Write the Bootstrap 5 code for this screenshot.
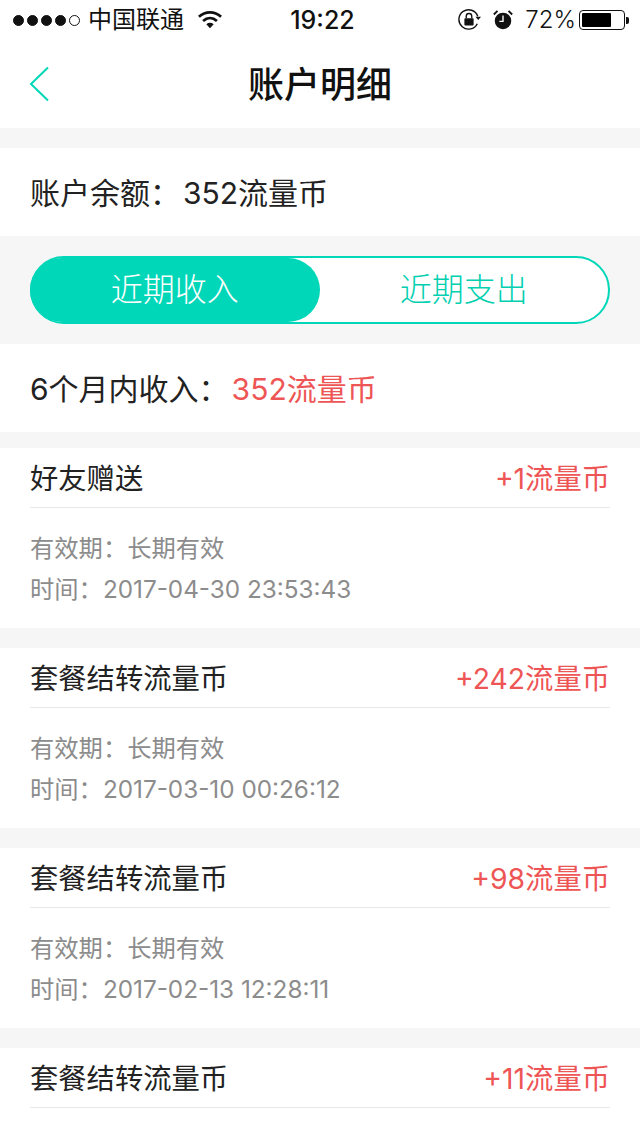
<!DOCTYPE html>
<html lang="zh-CN">
<head>
<meta charset="UTF-8">
<title>账户明细</title>
<link href="https://cdn.jsdelivr.net/npm/bootstrap@5.3.3/dist/css/bootstrap.min.css" rel="stylesheet">
<style>
  body {
    background: #fff;
    color: #1f1f1f;
    font-family: Inter, "Noto Sans CJK SC", sans-serif;
  }
  .page-wrap { width: 640px; height: 1136px; overflow: hidden; }
  .status-bar { height: 40px; padding: 0 11px 0 13px; font-size: 24px; color: #111; }
  .signal-dot { width: 11px; height: 11px; border-radius: 50%; background: #111; border: 1px solid #111; margin-right: 3px; }
  .signal-dot.empty { background: #fff; }
  .carrier { margin-left: 5px; }
  .wifi-icon { margin-left: 14px; }
  .clock { left: 5px; right: 0; top: 5px; text-align: center; font-size: 25px; line-height: 30px; font-weight: 500; }
  .alarm-icon { margin-left: 11px; }
  .batt-pct { margin-left: 11px; font-weight: 300; }
  .batt { width: 46px; height: 20px; border: 1px solid #111; border-radius: 4px; padding: 2px; margin-left: 3px; }
  .batt-fill { height: 100%; background: #000; border-radius: 1px; }
  .batt-tip { width: 3px; height: 7px; background: #111; border-radius: 0 2px 2px 0; margin-left: 1px; }
  .top-nav { height: 88px; }
  .top-nav h1 { font-size: 36px; font-weight: 500; margin: 0; padding-top: 3px; color: #111; }
  .back-arrow { left: 28px; top: 26px; }
  .gap-20 { height: 20px; background: #f6f6f6; }
  .gap-16 { height: 16px; background: #f6f6f6; }
  .summary-row { height: 88px; padding: 1px 30px 0; font-size: 30px; color: #222; }
  .colon-mark { font-family: "Noto Sans CJK TC", sans-serif; margin-right: 3px; }
  .switch-wrap { background: #f6f6f6; padding: 20px 30px; }
  .switch-box { height: 68px; border: 2px solid #00d7b8; border-radius: 34px; background: #fff; }
  .switch-on, .switch-off { width: 290px; font-size: 32px; font-weight: 300; }
  .switch-on { width: 291px; margin: -2px 0 -2px -2px; background: #00d7b8; color: #fff; border-radius: 34px; }
  .switch-off { color: #00cfb0; }
  .red-text { color: #ee5555; }
  .rec { padding: 0 30px; height: 180px; }
  .rec-head { height: 60px; border-bottom: 1px solid #e8e8e8; font-size: 28.300px; color: #222; padding-top: 3px; }
  .rec-info { padding-top: 19px; font-size: 24.300px; line-height: 40px; color: #8c8c8c; }
  .rec-info .colon-mark { margin-right: 0; }
</style>
</head>
<body>
<div class="page-wrap">
<div class="position-relative status-bar d-flex align-items-center justify-content-between">
  <div class="d-flex align-items-center">
    <span class="signal-dot"></span><span class="signal-dot"></span><span class="signal-dot"></span><span class="signal-dot"></span><span class="signal-dot empty"></span>
    <span class="carrier">中国联通</span>
    <svg class="wifi-icon" width="24" height="20" viewBox="0 0 26 20"><path d="M1 6.500C8 0 18 0 25 6.500" fill="none" stroke="#111" stroke-width="3"/><path d="M5.500 11C10 7 16 7 20.500 11" fill="none" stroke="#111" stroke-width="3"/><path d="M9 14.500C11.500 12.500 14.500 12.500 17 14.500L13 19Z" fill="#111"/></svg>
  </div>
  <div class="position-absolute clock">19:22</div>
  <div class="d-flex align-items-center">
    <svg width="24" height="24" viewBox="0 0 26 26"><path d="M22 17A10.500 10.500 0 1 1 22.500 9" fill="none" stroke="#111" stroke-width="1.500"/><path d="M20 9.500h6l-3 3.500Z" fill="#111"/><rect x="8" y="11" width="10" height="8" rx="1" fill="#111"/><path d="M10 11V9a3 3 0 0 1 6 0v2" fill="none" stroke="#111" stroke-width="1.500"/></svg>
    <svg class="alarm-icon" width="22" height="22" viewBox="0 0 24 24"><circle cx="12" cy="13" r="9" fill="#111"/><path d="M12 7v6.500h-4" fill="none" stroke="#fff" stroke-width="1.500"/><path d="M2 6L6 2M22 6L18 2" stroke="#111" stroke-width="2"/></svg>
    <span class="batt-pct">72%</span>
    <div class="batt"><div class="batt-fill" style="width: 72%"></div></div>
    <div class="batt-tip"></div>
  </div>
</div>

<div class="position-relative top-nav d-flex align-items-center justify-content-center">
  <svg class="position-absolute back-arrow" width="22" height="36" viewBox="0 0 22 36"><path d="M20 1.500L3 18L20 34.500" fill="none" stroke="#00d7b8" stroke-width="2"/></svg>
  <h1>账户明细</h1>
</div>

<div class="gap-20"></div>
<div class="summary-row d-flex align-items-center"><span>账户余额<span class="colon-mark">：</span>352流量币</span></div>

<div class="switch-wrap">
  <div class="switch-box d-flex align-items-center">
    <div class="switch-on h-100 d-flex align-items-center justify-content-center">近期收入</div>
    <div class="switch-off d-flex align-items-center justify-content-center">近期支出</div>
  </div>
</div>

<div class="summary-row d-flex align-items-center"><span>6个月内收入<span class="colon-mark">：</span><span class="red-text">352流量币</span></span></div>
<div class="gap-16"></div>

<div class="rec">
  <div class="rec-head d-flex align-items-center justify-content-between"><span>好友赠送</span><span class="red-text">+1流量币</span></div>
  <div class="rec-info"><div>有效期<span class="colon-mark">：</span>长期有效</div><div>时间<span class="colon-mark">：</span>2017-04-30 23:53:43</div></div>
</div>
<div class="gap-20"></div>
<div class="rec">
  <div class="rec-head d-flex align-items-center justify-content-between"><span>套餐结转流量币</span><span class="red-text">+242流量币</span></div>
  <div class="rec-info"><div>有效期<span class="colon-mark">：</span>长期有效</div><div>时间<span class="colon-mark">：</span>2017-03-10 00:26:12</div></div>
</div>
<div class="gap-20"></div>
<div class="rec">
  <div class="rec-head d-flex align-items-center justify-content-between"><span>套餐结转流量币</span><span class="red-text">+98流量币</span></div>
  <div class="rec-info"><div>有效期<span class="colon-mark">：</span>长期有效</div><div>时间<span class="colon-mark">：</span>2017-02-13 12:28:11</div></div>
</div>
<div class="gap-20"></div>
<div class="rec">
  <div class="rec-head d-flex align-items-center justify-content-between"><span>套餐结转流量币</span><span class="red-text">+11流量币</span></div>
</div>
</div>
<script src="https://cdn.jsdelivr.net/npm/bootstrap@5.3.3/dist/js/bootstrap.bundle.min.js"></script>
</body>
</html>
